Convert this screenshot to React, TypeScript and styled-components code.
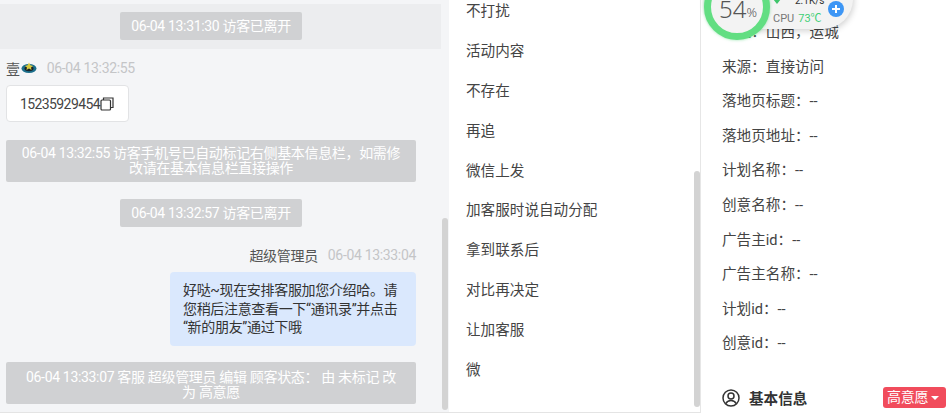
import styled, { createGlobalStyle } from "styled-components";
import { Fragment } from "react";

const GlobalStyle = createGlobalStyle`
  html, body {
    margin: 0;
    padding: 0;
    height: 415px;
    overflow: hidden;
    background: #fff;
    font-family: Roboto, "Noto Sans CJK SC", sans-serif;
    color: #333;
  }
  * { box-sizing: border-box; }
`;

const Page = styled.div`
  width: 946px;
  height: 415px;
  display: flex;
  overflow: hidden;
`;

const ChatPane = styled.div`
  position: relative;
  width: 449px;
  height: 413px;
  flex: none;
  background: #f4f5f7;
  padding-top: 4px;
  border-bottom: 1px solid #e4e4e4;
  letter-spacing: -0.33px;
`;

const TopBand = styled.div`
  width: 441px;
  height: 45px;
  background: #ecedef;
  display: flex;
  padding: 0 0 1px 120px;
`;

const ChatList = styled.div`
  width: 410px;
  margin-left: 6px;
  display: flex;
  flex-direction: column;
`;

const Notice = styled.div<{ $wide?: boolean; $top: number; $padTop?: number }>`
  width: ${(p) => (p.$wide ? "410px" : "182px")};
  height: ${(p) => (p.$wide ? "42px" : "28px")};
  margin-top: ${(p) => p.$top}px;
  align-self: center;
  flex: none;
  background: #d0d1d3;
  color: #fff;
  border-radius: 2px;
  font-size: 14px;
  line-height: ${(p) => (p.$wide ? "15px" : "28px")};
  padding: ${(p) => (p.$wide ? `${p.$padTop ?? 6}px 13px 0` : "0")};
  text-align: center;
`;

const MetaRow = styled.div<{ $right?: boolean; $top: number }>`
  display: flex;
  align-items: center;
  gap: 10px;
  height: 20px;
  margin-top: ${(p) => p.$top}px;
  font-size: 14px;
  justify-content: ${(p) => (p.$right ? "flex-end" : "flex-start")};
`;

const Sender = styled.span`
  color: #555;
  display: flex;
  align-items: center;
  gap: 1px;
`;

const Time = styled.span`
  color: #c4c5c7;
`;

const PhoneCard = styled.div`
  width: 123px;
  height: 37px;
  margin-top: 7px;
  background: #fff;
  border: 1px solid #e2e3e5;
  border-radius: 4px;
  display: flex;
  align-items: center;
  padding-left: 13px;
  font-size: 14px;
  letter-spacing: -0.6px;
  color: #444;
`;

const Bubble = styled.div`
  width: 246px;
  height: 74px;
  margin-top: 7px;
  align-self: flex-end;
  background: #dae8fd;
  border-radius: 4px;
  padding: 9px 8px 9px 13px;
  font-size: 14px;
  line-height: 18.5px;
  color: #333;
`;

const ScrollThumb = styled.div<{ $top: number; $height: number; $left: number }>`
  position: absolute;
  left: ${(p) => p.$left}px;
  top: ${(p) => p.$top}px;
  width: 6px;
  height: ${(p) => p.$height}px;
  background: #d3d3d3;
  border-radius: 3px;
`;

const TagPane = styled.div`
  position: relative;
  width: 252px;
  height: 413px;
  flex: none;
  background: #fff;
  border-bottom: 1px solid #e4e4e4;
  border-right: 1px solid #e6e6e6;
  padding-left: 17px;
`;

const TagList = styled.ul`
  list-style: none;
  margin: -8px 0 0;
  padding: 0;
`;

const TagItem = styled.li`
  height: 39.9px;
  line-height: 39.9px;
  font-size: 14.6px;
  color: #444;
`;

const InfoPane = styled.div`
  position: relative;
  flex: 1;
  background: #fff;
  padding: 15px 0 0 21px;
`;

const InfoRow = styled.div`
  height: 34.6px;
  line-height: 34.6px;
  font-size: 14.6px;
  color: #444;
  white-space: pre;
`;

const SectionRow = styled.div`
  display: flex;
  align-items: center;
  height: 24px;
  margin-top: 25px;
`;

const SectionTitle = styled.span`
  font-size: 14.6px;
  font-weight: 700;
  color: #333;
  margin-left: 9px;
`;

const IntentTag = styled.span`
  margin-left: auto;
  width: 63px;
  height: 21px;
  background: #f14c5c;
  border-radius: 3px;
  color: #fff;
  font-size: 14px;
  line-height: 21px;
  padding-left: 4px;
  display: flex;
  align-items: center;
  gap: 3px;
  letter-spacing: -0.3px;
`;

const Caret = styled.i`
  width: 0;
  height: 0;
  border-left: 4px solid transparent;
  border-right: 4px solid transparent;
  border-top: 4px solid #fff;
`;

const Widget = styled.div`
  position: absolute;
  left: 3px;
  top: -31px;
  width: 149px;
  height: 60px;
  background: #f3f3f3;
  border-radius: 30px;
  box-shadow: 1px 2px 6px rgba(0, 0, 0, 0.18);
`;

const Gauge = styled.div`
  position: absolute;
  left: 0;
  top: 5px;
  width: 66px;
  height: 66px;
  border-radius: 50%;
  background: #f3f3f3;
  border: 7px solid #62de82;
  box-shadow: 0 0 3px rgba(80, 210, 120, 0.6);
  display: flex;
  align-items: center;
  justify-content: center;
  padding: 4px 0 0 2px;
  color: #555;
  font-size: 24px;
  line-height: 1;
  font-family: "Noto Sans", sans-serif;
  font-weight: 300;

  small {
    font-size: 13px;
    margin-top: 6px;
  }
`;

const Speed = styled.span`
  position: absolute;
  left: 91px;
  top: 27px;
  font-size: 10px;
  line-height: 10px;
  color: #333;
`;

const SpeedArrow = styled.i`
  position: absolute;
  left: 69px;
  top: 30px;
  width: 0;
  height: 0;
  border-left: 4px solid transparent;
  border-right: 4px solid transparent;
  border-top: 5px solid #3fc56b;
`;

const Cpu = styled.span`
  position: absolute;
  left: 69px;
  top: 43px;
  font-size: 11px;
  line-height: 14px;
  color: #777;

  b {
    font-weight: 400;
    color: #3fcf75;
    margin-left: 4px;
  }
`;

const PlusButton = styled.span`
  position: absolute;
  left: 124px;
  top: 32px;
  width: 16px;
  height: 16px;
  border-radius: 50%;
  background: #3d96f5;
  display: flex;
  align-items: center;
  justify-content: center;
`;

const tags = ["不打扰", "活动内容", "不存在", "再追", "微信上发", "加客服时说自动分配", "拿到联系后", "对比再决定", "让加客服", "微"];

const infoRows = [
  "地区：山西，运城",
  "来源：直接访问",
  "落地页标题：--",
  "落地页地址：--",
  "计划名称：--",
  "创意名称：--",
  "广告主id：--",
  "广告主名称：--",
  "计划id：--",
  "创意id：--",
];

function CopyIcon() {
  return (
    <svg width="14" height="14" viewBox="0 0 14 14" fill="none" stroke="#333" strokeWidth="1.2">
      <rect x="1" y="3" width="9.5" height="10" rx="1" />
      <path d="M3.5 3V1h9.5v9.5h-2.5" />
    </svg>
  );
}

function EmojiIcon() {
  return (
    <svg width="16" height="12" viewBox="0 0 16 12">
      <ellipse cx="8" cy="6.5" rx="7.5" ry="4.5" fill="#1c6f8c" />
      <ellipse cx="8" cy="6.5" rx="4.5" ry="2.8" fill="#18232a" />
      <path d="M8 0.5l1.4 2.8 2.8.6-2.2 1.600.6 2.500-2.600-1.400-2.600 1.400.6-2.500-2.200-1.600 2.800-.6z" fill="#d9c93c" />
    </svg>
  );
}

function UserCircleIcon() {
  return (
    <svg width="18" height="18" viewBox="0 0 18 18" fill="none" stroke="#333" strokeWidth="1.5">
      <circle cx="9" cy="9" r="8" />
      <circle cx="9" cy="7" r="3" />
      <path d="M3.8 14.6c1-2.2 3-3.1 5.2-3.1s4.200.9 5.200 3.100" />
    </svg>
  );
}

function App() {
  return (
    <Fragment>
      <GlobalStyle />
      <Page>
        <ChatPane>
          <TopBand>
            <Notice $top={0}>06-04 13:31:30 访客已离开</Notice>
          </TopBand>
          <ChatList>
            <MetaRow $top={9}>
              <Sender>
                壹
                <EmojiIcon />
              </Sender>
              <Time>06-04 13:32:55</Time>
            </MetaRow>
            <PhoneCard>
              15235929454
              <CopyIcon />
            </PhoneCard>
            <Notice $wide $top={18}>
              06-04 13:32:55 访客手机号已自动标记右侧基本信息栏，如需修改请在基本信息栏直接操作
            </Notice>
            <Notice $top={17}>06-04 13:32:57 访客已离开</Notice>
            <MetaRow $right $top={18}>
              <Sender>超级管理员</Sender>
              <Time>06-04 13:33:04</Time>
            </MetaRow>
            <Bubble>
              好哒~现在安排客服加您介绍哈。请
              <br />
              您稍后注意查看一下“通讯录”并点击
              <br />
              “新的朋友”通过下哦
            </Bubble>
            <Notice $wide $top={16} $padTop={8}>
              06-04 13:33:07 客服 超级管理员 编辑 顾客状态： 由 未标记 改
              <br />为 高意愿
            </Notice>
          </ChatList>
          <ScrollThumb $left={442} $top={218} $height={192} />
        </ChatPane>
        <TagPane>
          <TagList>
            {tags.map((tag) => (
              <TagItem key={tag}>{tag}</TagItem>
            ))}
          </TagList>
          <ScrollThumb $left={245} $top={171} $height={236} />
        </TagPane>
        <InfoPane>
          <Widget>
            <Gauge>
              54<small>%</small>
            </Gauge>
            <SpeedArrow />
            <Speed>2.1K/s</Speed>
            <Cpu>
              CPU<b>73℃</b>
            </Cpu>
            <PlusButton>
              <svg width="10" height="10" viewBox="0 0 10 10" stroke="#fff" strokeWidth="2">
                <path d="M5 1v8M1 5h8" />
              </svg>
            </PlusButton>
          </Widget>
          {infoRows.map((row) => (
            <InfoRow key={row}>{row}</InfoRow>
          ))}
          <SectionRow>
            <UserCircleIcon />
            <SectionTitle>基本信息</SectionTitle>
            <IntentTag>
              高意愿
              <Caret />
            </IntentTag>
          </SectionRow>
        </InfoPane>
      </Page>
    </Fragment>
  );
}

export default App;
